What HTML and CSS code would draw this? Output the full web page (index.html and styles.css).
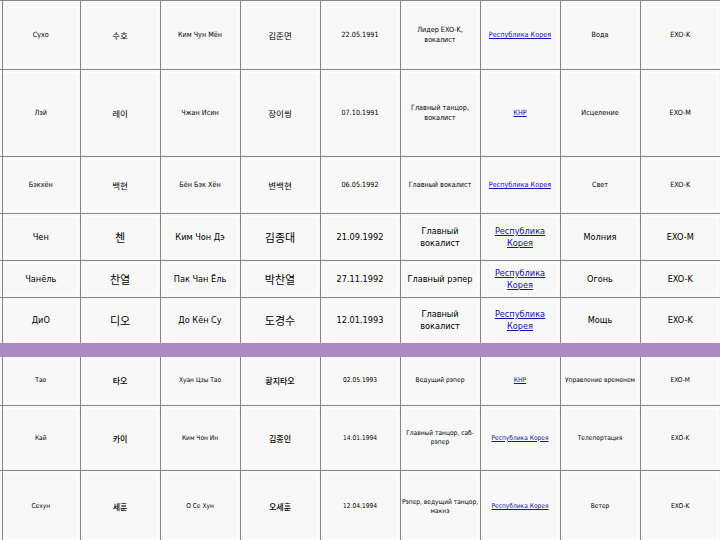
FILE: index.html
```html
<!DOCTYPE html>
<html lang="ru">
<head>
<meta charset="utf-8">
<title>EXO</title>
<link rel="stylesheet" href="styles.css">
</head>
<body>
<table class="grid">
  <colgroup>
    <col class="c"><col class="c"><col class="c"><col class="c"><col class="c"><col class="c"><col class="c"><col class="c"><col class="c">
  </colgroup>
  <tbody>
    <tr class="r1 s">
      <td>Сухо</td><td class="ko">수호</td><td>Ким Чун Мён</td><td class="ko">김준면</td><td>22.05.1991</td><td>Лидер EXO-K, вокалист</td><td><a href="#">Республика Корея</a></td><td>Вода</td><td>EXO-K</td>
    </tr>
    <tr class="r2 s">
      <td>Лэй</td><td class="ko">레이</td><td>Чжан Исин</td><td class="ko">장이씽</td><td>07.10.1991</td><td>Главный танцор, вокалист</td><td><a href="#">КНР</a></td><td>Исцеление</td><td>EXO-M</td>
    </tr>
    <tr class="r3 s">
      <td>Бэкхён</td><td class="ko">백현</td><td>Бён Бэк Хён</td><td class="ko">변백현</td><td>06.05.1992</td><td>Главный вокалист</td><td><a href="#">Республика Корея</a></td><td>Свет</td><td>EXO-K</td>
    </tr>
    <tr class="r4 m">
      <td>Чен</td><td class="ko">첸</td><td>Ким Чон Дэ</td><td class="ko">김종대</td><td>21.09.1992</td><td>Главный вокалист</td><td><a href="#">Республика Корея</a></td><td>Молния</td><td>EXO-M</td>
    </tr>
    <tr class="r5 m">
      <td>Чанёль</td><td class="ko">찬열</td><td>Пак Чан Ёль</td><td class="ko">박찬열</td><td>27.11.1992</td><td>Главный рэпер</td><td><a href="#">Республика Корея</a></td><td>Огонь</td><td>EXO-K</td>
    </tr>
    <tr class="r6 m">
      <td>ДиО</td><td class="ko">디오</td><td>До Кён Су</td><td class="ko">도경수</td><td>12.01.1993</td><td>Главный вокалист</td><td><a href="#">Республика Корея</a></td><td>Мощь</td><td>EXO-K</td>
    </tr>
    <tr class="band"><td colspan="9"></td></tr>
    <tr class="r7 xs">
      <td>Тао</td><td class="ko">타오</td><td>Хуан Цзы Тао</td><td class="ko">황지타오</td><td>02.05.1993</td><td>Ведущий рэпер</td><td><a href="#">КНР</a></td><td>Управление временем</td><td>EXO-M</td>
    </tr>
    <tr class="r8 xs">
      <td>Кай</td><td class="ko">카이</td><td>Ким Чон Ин</td><td class="ko">김종인</td><td>14.01.1994</td><td>Главный танцор, саб-рэпер</td><td><a href="#">Республика Корея</a></td><td>Телепортация</td><td>EXO-K</td>
    </tr>
    <tr class="r9 xs">
      <td>Сехун</td><td class="ko">세훈</td><td>О Се Хун</td><td class="ko">오세훈</td><td>12.04.1994</td><td>Рэпер, ведущий танцор, макнэ</td><td><a href="#">Республика Корея</a></td><td>Ветер</td><td>EXO-K</td>
    </tr>
  </tbody>
</table>
</body>
</html>
```
FILE: styles.css
```css
html, body {
  margin: 0;
  padding: 0;
  background: #f8f8f8;
  overflow: hidden;
}
body {
  width: 720px;
  height: 540px;
}
.grid {
  margin: 0;
  width: 720px;
  border-collapse: collapse;
  table-layout: fixed;
  font-family: "DejaVu Sans Condensed", "DejaVu Sans", "Liberation Sans", sans-serif;
  color: #000;
  background: #f8f8f8;
}
.c { width: 80px; }
.grid td {
  border: 1px solid #858585;
  text-align: center;
  vertical-align: middle;
  padding: 0 1px;
  box-shadow: inset 0 0 0 2px #f8f8f8, inset 0 0 0 3px #ffffff;
  overflow: hidden;
}
.grid tr td:first-child {
  border-left: none;
  padding-left: 3px;
  box-shadow: inset 2px 0 0 #f8f8f8, inset 3px 0 0 #858585, inset 0 0 0 2px #f8f8f8, inset 0 0 0 3px #ffffff;
}
.grid tr td:last-child { border-right: none; }
.grid a {
  color: #1212b0;
  text-decoration: underline;
}
.s td { font-size: 7.2px; line-height: 10px; }
.s td.ko { font-size: 8.5px; font-family: "Noto Sans CJK KR", sans-serif; }
.m td { font-size: 9.1px; line-height: 12px; }
.m td.ko { font-size: 11px; font-family: "Noto Sans CJK KR", sans-serif; }
.xs td { font-size: 6.6px; line-height: 9px; }
.xs td.ko { font-size: 8px; font-family: "Noto Sans CJK KR", sans-serif; font-weight: 500; }
.r1 { height: 69px; }
.r2 { height: 87px; }
.r3 { height: 57px; }
.r4 { height: 47px; }
.r5 { height: 37px; }
.r6 { height: 46px; }
.grid tr.band td {
  height: 10px;
  padding: 0;
  background: #ab8ac2;
  border: none;
  border-top: 2px solid #ab8ac2;
  border-bottom: 2px solid #ab8ac2;
  box-shadow: none;
}
.r7 { height: 50px; }
.r8 { height: 65px; }
.r9 { height: 72px; }
```
